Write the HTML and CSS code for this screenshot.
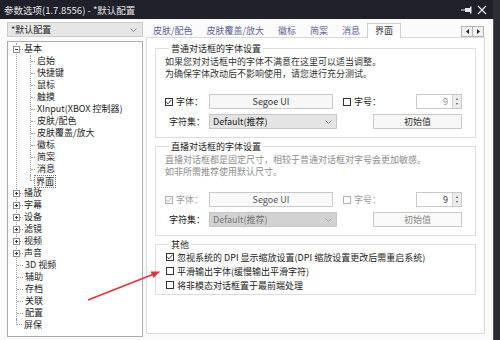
FILE: index.html
```html
<!DOCTYPE html>
<html lang="zh-CN">
<head>
    <meta charset="UTF-8">
    <title>参数选项</title>
    <link rel="stylesheet" href="styles.css">
</head>
<body>
    <div class="window">
        <div class="titlebar">
            <span class="title">参数选项(1.7.8556) - *默认配置</span>
            <span class="title-btns">
                <svg width="12" height="8" viewBox="0 0 12 8"><path d="M0 4h4" stroke="#e8e8e8" stroke-width="1"/><rect x="4" y="2" width="5" height="4" fill="#e8e8e8"/><rect x="9" y="0.5" width="1.5" height="7" fill="#e8e8e8"/></svg>
                <svg width="10" height="10" viewBox="0 0 10 10"><path d="M1 1L9 9M9 1L1 9" stroke="#e8e8e8" stroke-width="1.2"/></svg>
            </span>
        </div>

        <div class="main">
            <div class="sidebar">
                <div class="preset">
                    <span>*默认配置</span>
                    <svg width="7" height="4" viewBox="0 0 7 4"><path d="M0.5 0.5L3.5 3.5L6.5 0.5" fill="none" stroke="#888"/></svg>
                </div>
                <div class="tree">
                    <div class="branch">
                        <div class="node"><span class="tog minus"></span><span class="dash short"></span>基本</div>
                        <div class="sub">
                            <div class="leaf"><span class="dash"></span>启始</div>
                            <div class="leaf"><span class="dash"></span>快捷键</div>
                            <div class="leaf"><span class="dash"></span>鼠标</div>
                            <div class="leaf"><span class="dash"></span>触摸</div>
                            <div class="leaf"><span class="dash"></span>XInput(XBOX 控制器)</div>
                            <div class="leaf"><span class="dash"></span>皮肤/配色</div>
                            <div class="leaf"><span class="dash"></span>皮肤覆盖/放大</div>
                            <div class="leaf"><span class="dash"></span>徽标</div>
                            <div class="leaf"><span class="dash"></span>简案</div>
                            <div class="leaf"><span class="dash"></span>消息</div>
                            <div class="leaf last"><span class="dash"></span><span class="selected">界面</span></div>
                        </div>
                        <div class="node"><span class="tog"></span><span class="dash short"></span>播放</div>
                        <div class="node"><span class="tog"></span><span class="dash short"></span>字幕</div>
                        <div class="node"><span class="tog"></span><span class="dash short"></span>设备</div>
                        <div class="node"><span class="tog"></span><span class="dash short"></span>滤镜</div>
                        <div class="node"><span class="tog"></span><span class="dash short"></span>视频</div>
                        <div class="node"><span class="tog"></span><span class="dash short"></span>声音</div>
                        <div class="node"><span class="dash long"></span>3D 视频</div>
                        <div class="node"><span class="dash long"></span>辅助</div>
                        <div class="node"><span class="dash long"></span>存档</div>
                        <div class="node"><span class="dash long"></span>关联</div>
                        <div class="node"><span class="dash long"></span>配置</div>
                        <div class="node last"><span class="dash long"></span>屏保</div>
                    </div>
                </div>
            </div>

            <div class="pane">
                <div class="tabs">
                    <span class="tab">皮肤/配色</span>
                    <span class="tab">皮肤覆盖/放大</span>
                    <span class="tab">徽标</span>
                    <span class="tab">简案</span>
                    <span class="tab">消息</span>
                    <span class="tab active">界面</span>
                    <span class="tab-scroll">
                        <span class="sbtn"><svg width="3" height="5" viewBox="0 0 3 5"><path d="M3 0V5L0 2.5z" fill="#222"/></svg></span>
                        <span class="sbtn"><svg width="3" height="5" viewBox="0 0 3 5"><path d="M0 0V5L3 2.5z" fill="#222"/></svg></span>
                    </span>
                </div>

                <div class="panel">
                    <fieldset class="group">
                        <legend>普通对话框的字体设置</legend>
                        <div class="desc">如果您对对话框中的字体不满意在这里可以适当调整。<br>为确保字体改动后不影响使用，请您进行充分测试。</div>
                        <div class="row first">
                            <span class="cbl"><span class="cb checked"></span>字体：</span>
                            <span class="btn wide">Segoe UI</span>
                            <span class="cbl size"><span class="cb"></span>字号：</span>
                            <span class="spin"><span class="val">9</span><span class="arrows"><i class="up"></i><i class="down"></i></span></span>
                        </div>
                        <div class="row">
                            <span class="lbl">字符集：</span>
                            <span class="combo">Default(推荐)<svg width="7" height="4" viewBox="0 0 7 4"><path d="M0.5 0.5L3.5 3.5L6.5 0.5" fill="none" stroke="#888"/></svg></span>
                            <span class="btn reset">初始值</span>
                        </div>
                    </fieldset>

                    <fieldset class="group disabled">
                        <legend>直播对话框的字体设置</legend>
                        <div class="desc">直播对话框都是固定尺寸，相较于普通对话框对字号会更加敏感。<br>如非所需推荐使用默认尺寸。</div>
                        <div class="row first">
                            <span class="cbl"><span class="cb checked"></span>字体：</span>
                            <span class="btn wide">Segoe UI</span>
                            <span class="cbl size"><span class="cb"></span>字号：</span>
                            <span class="spin"><span class="val">9</span><span class="arrows"><i class="up"></i><i class="down"></i></span></span>
                        </div>
                        <div class="row">
                            <span class="lbl">字符集：</span>
                            <span class="combo">Default(推荐)<svg width="7" height="4" viewBox="0 0 7 4"><path d="M0.5 0.5L3.5 3.5L6.5 0.5" fill="none" stroke="#aaa"/></svg></span>
                            <span class="btn reset">初始值</span>
                        </div>
                    </fieldset>

                    <fieldset class="group other">
                        <legend>其他</legend>
                        <div class="opt"><span class="cb checked"></span>忽视系统的 DPI 显示缩放设置(DPI 缩放设置更改后需重启系统)</div>
                        <div class="opt"><span class="cb"></span>平滑输出字体(缓慢输出平滑字符)</div>
                        <div class="opt"><span class="cb"></span>将非模态对话框置于最前端处理</div>
                    </fieldset>
                </div>
            </div>
        </div>
    </div>
    <div class="desk"></div>

    <svg class="arrow" width="500" height="340" viewBox="0 0 500 340">
        <path d="M88 300L154 274" stroke="#e8313a" stroke-width="1.6"/>
        <path d="M160 271.5L150.5 271.5L153.5 278z" fill="#e8313a"/>
    </svg>
</body>
</html>
```

FILE: styles.css
```css
html,
body {
    margin: 0;
    padding: 0;
}

body {
    width: 500px;
    height: 340px;
    overflow: hidden;
    display: flex;
    position: relative;
    background: #2d2e35;
    font-family: "Noto Sans CJK SC", "Liberation Sans", sans-serif;
    font-size: 9px;
    color: #222;
}

.window {
    width: 493px;
    height: 340px;
    background: #fbfbfb;
    display: flex;
    flex-direction: column;
}

.titlebar {
    height: 19px;
    background: #1f2029;
    color: #e6e6e6;
    display: flex;
    align-items: center;
    justify-content: space-between;
    padding: 0 4px;
    font-size: 9.5px;
}

.title-btns {
    display: flex;
    align-items: center;
    gap: 4px;
    margin-right: 2px;
}

.desk {
    flex: 1;
    background: #2b2c33;
    border-left: 1px solid #55565c;
    margin-top: 19px;
}

.main {
    flex: 1;
    display: flex;
    padding-top: 3px;
}

/* left column */
.sidebar {
    width: 136px;
    margin-left: 7px;
    display: flex;
    flex-direction: column;
}

.preset {
    height: 13px;
    background: #e6e6e6;
    border: 1px solid #cacaca;
    display: flex;
    align-items: center;
    justify-content: space-between;
    padding: 0 5px 0 3px;
    line-height: 13px;
}

.tree {
    margin-top: 4px;
    height: 293px;
    background: #fff;
    border: 1px solid #acacac;
    padding-top: 1px;
    line-height: 12px;
}

.branch {
    margin-left: 8px;
    border-left: 1px dotted #9a9a9a;
}

.node,
.leaf {
    display: flex;
    align-items: center;
    height: 12px;
    white-space: nowrap;
}

.node.last,
.leaf.last {
    margin-left: -1px;
    border-left: 1px solid #fff;
    background: linear-gradient(#fff, #fff) 0 0 / 1px 6px no-repeat;
}

.node.last .dash,
.leaf.last .dash {
    border-left: 1px dotted #9a9a9a;
    height: 6px;
    margin-top: 6px;
    border-top: 1px dotted #9a9a9a;
    box-sizing: border-box;
    margin-left: -1px;
    align-self: flex-start;
    margin-top: 0;
    border-top: 0;
    border-bottom: 1px dotted #9a9a9a;
}

.tog {
    width: 7px;
    height: 7px;
    box-sizing: border-box;
    border: 1px solid #8d8d8d;
    background:
        linear-gradient(#333, #333) center / 3px 1px no-repeat,
        linear-gradient(#333, #333) center / 1px 3px no-repeat,
        #fff;
    margin-left: -4px;
}

.tog.minus {
    background:
        linear-gradient(#333, #333) center / 3px 1px no-repeat,
        #fff;
}

.dash {
    width: 4px;
    border-top: 1px dotted #9a9a9a;
    margin-right: 2px;
}

.dash.short {
    width: 3px;
    margin-right: 1px;
}

.dash.long {
    width: 6px;
    margin-right: 2px;
}

.sub {
    margin-left: 13px;
    border-left: 1px dotted #9a9a9a;
}

.selected {
    outline: 1px dotted #777;
    padding: 0 1px;
    margin-left: -1px;
    line-height: 11px;
}

/* right column */
.pane {
    width: 339px;
    margin-left: 3px;
    display: flex;
    flex-direction: column;
}

.tabs {
    height: 15px;
    display: flex;
    align-items: flex-end;
    color: #5c6194;
}

.tab {
    padding: 0 7px;
    height: 13px;
    line-height: 13px;
}

.tab.active {
    height: 14px;
    background: #fff;
    color: #333;
    border: 1px solid #cfcfcf;
    border-bottom: 0;
    margin-bottom: -1px;
    position: relative;
    z-index: 1;
}

.tab-scroll {
    margin-left: auto;
    margin-right: 1px;
    margin-bottom: 1px;
    display: flex;
    align-self: center;
    margin-top: 4px;
}

.sbtn {
    width: 10px;
    height: 9px;
    border: 1px solid #b4b4b4;
    background: #f0f0f0;
    display: flex;
    align-items: center;
    justify-content: center;
}

.sbtn + .sbtn {
    border-left: 0;
}

.panel {
    height: 290px;
    background: #fff;
    border: 1px solid #d9d9d9;
    padding: 5px 8px 0 8px;
}

.group {
    margin: 0 0 3px 0;
    border: 1px solid #dcdcdc;
    padding: 0 13px 8px 9px;
    min-width: 0;
}

.group legend {
    padding: 0 2px;
    margin-left: 4px;
    line-height: 11px;
    color: #222;
}

.desc {
    margin-top: 2px;
    line-height: 12px;
    color: #333;
}

.row {
    display: flex;
    align-items: center;
    height: 15px;
    margin-top: 5px;
}

.row.first {
    margin-top: 14px;
}

.cbl {
    width: 44px;
    display: flex;
    align-items: center;
}

.cbl.size {
    margin-left: 10px;
}

.cb {
    width: 8px;
    height: 8px;
    border: 1px solid #333;
    background: #fff;
    margin-right: 3px;
    box-sizing: border-box;
    flex: none;
}

.cb.checked {
    background: #fff url("data:image/svg+xml,%3Csvg xmlns='http://www.w3.org/2000/svg' width='8' height='8'%3E%3Cpath d='M1.2 4L3 5.8L6.5 1.8' fill='none' stroke='%23333' stroke-width='1'/%3E%3C/svg%3E") center / 8px 8px no-repeat;
}

.btn {
    height: 13px;
    border: 1px solid #c9c9c9;
    background: #f7f7f7;
    text-align: center;
    line-height: 13px;
    color: #333;
}

.btn.wide {
    width: 122px;
}

.btn.reset {
    width: 87px;
    margin-left: auto;
}

.spin {
    width: 44px;
    height: 13px;
    margin-left: auto;
    border: 1px solid #c9c9c9;
    background: #fff;
    display: flex;
    line-height: 13px;
}

.spin .val {
    flex: 1;
    text-align: right;
    padding-right: 4px;
    color: #888;
}

.spin .arrows {
    width: 8px;
    border-left: 1px solid #d0d0d0;
    background: #ececec;
    display: flex;
    flex-direction: column;
    align-items: center;
    justify-content: space-around;
    padding: 2px 0;
}

.spin i {
    width: 0;
    height: 0;
    border-left: 1.5px solid transparent;
    border-right: 1.5px solid transparent;
}

.spin i.up {
    border-bottom: 2px solid #555;
}

.spin i.down {
    border-top: 2px solid #555;
}

.lbl {
    width: 40px;
    padding-right: 4px;
    text-align: right;
}

.combo {
    width: 119px;
    height: 13px;
    border: 1px solid #c6c6c6;
    background: #e4e4e4;
    display: flex;
    align-items: center;
    justify-content: space-between;
    padding: 0 4px 0 3px;
    line-height: 13px;
}

/* second group is greyed out */
.disabled .desc {
    color: #8c8c8c;
}

.disabled .cbl {
    color: #9a9a9a;
}

.disabled .cb {
    border-color: #b0b0b0;
}

.disabled .cb.checked {
    background-image: url("data:image/svg+xml,%3Csvg xmlns='http://www.w3.org/2000/svg' width='8' height='8'%3E%3Cpath d='M1.2 4L3 5.8L6.5 1.8' fill='none' stroke='%23aaa' stroke-width='1'/%3E%3C/svg%3E");
}

.disabled .btn {
    color: #555;
    background: #f9f9f9;
}

.disabled .btn.reset {
    color: #888;
}

.disabled .spin .val {
    color: #333;
}

.disabled .combo {
    background: #d2d2d2;
    color: #777;
}

.disabled .lbl {
    color: #111;
}

.other {
    padding-bottom: 2px;
}

.opt {
    display: flex;
    align-items: center;
    height: 14px;
    margin-left: 1px;
    white-space: nowrap;
}

.opt .cb {
    margin-right: 3px;
}

.arrow {
    position: absolute;
    left: 0;
    top: 0;
    pointer-events: none;
}
```
